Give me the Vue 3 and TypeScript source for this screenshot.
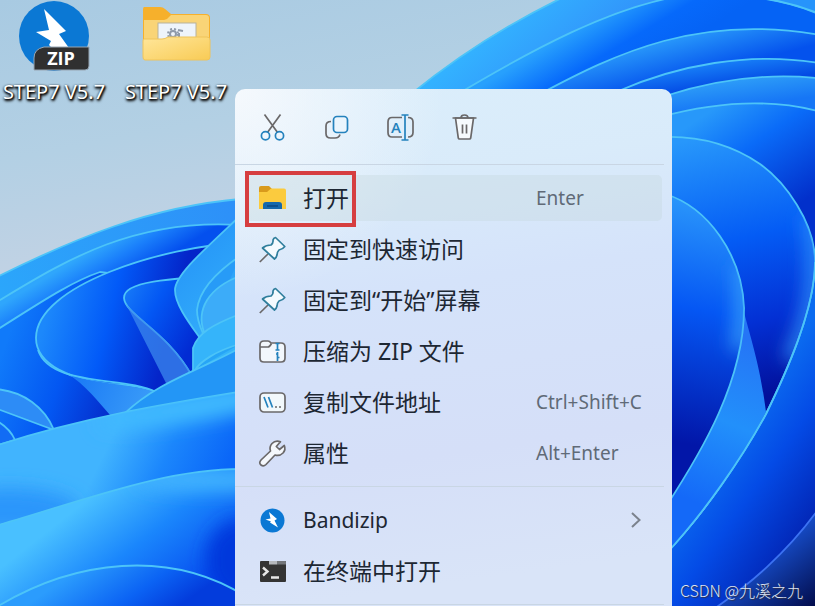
<script setup lang="ts">
interface Command {
  icon: string
  label: string
  shortcut?: string
  submenu?: boolean
  active?: boolean
}

const quickActions: { icon: string; label: string }[] = [
  { icon: 'cut', label: '剪切' },
  { icon: 'copy', label: '复制' },
  { icon: 'rename', label: '重命名' },
  { icon: 'delete', label: '删除' },
]

const groups: Command[][] = [
  [
    { icon: 'folder', label: '打开', shortcut: 'Enter', active: true },
    { icon: 'pin', label: '固定到快速访问' },
    { icon: 'pin', label: '固定到“开始”屏幕' },
    { icon: 'zip', label: '压缩为 ZIP 文件' },
    { icon: 'path', label: '复制文件地址', shortcut: 'Ctrl+Shift+C' },
    { icon: 'wrench', label: '属性', shortcut: 'Alt+Enter' },
  ],
  [
    { icon: 'bandizip', label: 'Bandizip', submenu: true },
    { icon: 'terminal', label: '在终端中打开' },
  ],
]

const isLatin = (text: string): boolean => /^[\x20-\x7e]+$/.test(text)
</script>

<template>
  <main class="desktop">
    <svg class="wallpaper" viewBox="0 0 815 606" preserveAspectRatio="xMidYMid slice" aria-hidden="true">
      <defs>
        <linearGradient id="sky" x1="0" y1="0" x2="0.25" y2="1">
          <stop offset="0" stop-color="#a8cae2" />
          <stop offset="0.25" stop-color="#b3d0e4" />
          <stop offset="0.5" stop-color="#c6d3e4" />
        </linearGradient>
        <linearGradient id="band1" gradientUnits="userSpaceOnUse" x1="0" y1="290" x2="234" y2="200">
          <stop offset="0" stop-color="#2ba6fb" />
          <stop offset="1" stop-color="#2d90f8" />
        </linearGradient>
        <linearGradient id="band2" gradientUnits="userSpaceOnUse" x1="95" y1="248" x2="118" y2="286">
          <stop offset="0" stop-color="#2fa6fc" />
          <stop offset="0.45" stop-color="#1a7ffb" />
          <stop offset="1" stop-color="#0450ee" />
        </linearGradient>
        <linearGradient id="band3" gradientUnits="userSpaceOnUse" x1="0" y1="360" x2="120" y2="400">
          <stop offset="0" stop-color="#107afa" />
          <stop offset="0.5" stop-color="#0357f2" />
          <stop offset="1" stop-color="#0529c8" />
        </linearGradient>
        <linearGradient id="petalL" gradientUnits="userSpaceOnUse" x1="45" y1="320" x2="165" y2="350">
          <stop offset="0" stop-color="#1c88fb" />
          <stop offset="0.5" stop-color="#025af8" />
          <stop offset="1" stop-color="#0425c9" />
        </linearGradient>
        <linearGradient id="petalS" gradientUnits="userSpaceOnUse" x1="125" y1="290" x2="200" y2="330">
          <stop offset="0" stop-color="#1679f8" />
          <stop offset="0.4" stop-color="#0357f4" />
          <stop offset="1" stop-color="#022bd3" />
        </linearGradient>
        <linearGradient id="flap" gradientUnits="userSpaceOnUse" x1="80" y1="375" x2="150" y2="405">
          <stop offset="0" stop-color="#1c7cf6" />
          <stop offset="1" stop-color="#3a9cf8" />
        </linearGradient>
        <linearGradient id="cyan" gradientUnits="userSpaceOnUse" x1="175" y1="260" x2="240" y2="330">
          <stop offset="0" stop-color="#2697f8" />
          <stop offset="1" stop-color="#35b0fb" />
        </linearGradient>
        <linearGradient id="wave1" gradientUnits="userSpaceOnUse" x1="115" y1="430" x2="220" y2="480">
          <stop offset="0" stop-color="#41b4fe" />
          <stop offset="0.5" stop-color="#1b86fc" />
          <stop offset="1" stop-color="#0a66f8" />
        </linearGradient>
        <linearGradient id="wave2" gradientUnits="userSpaceOnUse" x1="100" y1="490" x2="190" y2="605">
          <stop offset="0" stop-color="#49c0ff" />
          <stop offset="0.45" stop-color="#1a86fc" />
          <stop offset="1" stop-color="#0347ee" />
        </linearGradient>
        <linearGradient id="wave3" gradientUnits="userSpaceOnUse" x1="80" y1="568" x2="130" y2="640">
          <stop offset="0" stop-color="#2b9cfd" />
          <stop offset="0.6" stop-color="#0b63f4" />
          <stop offset="1" stop-color="#033cdc" />
        </linearGradient>
        <linearGradient id="r1" gradientUnits="userSpaceOnUse" x1="480" y1="40" x2="530" y2="100">
          <stop offset="0" stop-color="#33b2ff" />
          <stop offset="1" stop-color="#3194fb" />
        </linearGradient>
        <linearGradient id="r2" gradientUnits="userSpaceOnUse" x1="610" y1="8" x2="645" y2="66">
          <stop offset="0" stop-color="#27a0fd" />
          <stop offset="0.55" stop-color="#0669fb" />
          <stop offset="1" stop-color="#0563f5" />
        </linearGradient>
        <linearGradient id="r3" gradientUnits="userSpaceOnUse" x1="660" y1="36" x2="672" y2="82">
          <stop offset="0" stop-color="#2ca0fc" />
          <stop offset="1" stop-color="#0452ed" />
        </linearGradient>
        <linearGradient id="r4" gradientUnits="userSpaceOnUse" x1="740" y1="56" x2="744" y2="84">
          <stop offset="0" stop-color="#1a86fa" />
          <stop offset="1" stop-color="#034ae4" />
        </linearGradient>
        <linearGradient id="r5" gradientUnits="userSpaceOnUse" x1="740" y1="76" x2="744" y2="106">
          <stop offset="0" stop-color="#2fa0f8" />
          <stop offset="1" stop-color="#1676f6" />
        </linearGradient>
        <linearGradient id="r6" gradientUnits="userSpaceOnUse" x1="720" y1="105" x2="790" y2="210">
          <stop offset="0" stop-color="#2798fa" />
          <stop offset="0.4" stop-color="#0a6bf8" />
          <stop offset="1" stop-color="#0230cb" />
        </linearGradient>
        <linearGradient id="r7" gradientUnits="userSpaceOnUse" x1="690" y1="140" x2="750" y2="400">
          <stop offset="0" stop-color="#2797fb" />
          <stop offset="0.4" stop-color="#045cf5" />
          <stop offset="0.72" stop-color="#0330d4" />
          <stop offset="1" stop-color="#02109a" />
        </linearGradient>
        <linearGradient id="r8" gradientUnits="userSpaceOnUse" x1="710" y1="200" x2="665" y2="440">
          <stop offset="0" stop-color="#2b98fb" />
          <stop offset="0.45" stop-color="#0557f4" />
          <stop offset="1" stop-color="#0216a8" />
        </linearGradient>
        <linearGradient id="fold" gradientUnits="userSpaceOnUse" x1="752" y1="340" x2="690" y2="500">
          <stop offset="0" stop-color="#2575f6" />
          <stop offset="0.5" stop-color="#2290fb" />
          <stop offset="1" stop-color="#1469f8" />
        </linearGradient>
        <linearGradient id="lower" gradientUnits="userSpaceOnUse" x1="715" y1="455" x2="820" y2="530">
          <stop offset="0" stop-color="#0b6bf0" />
          <stop offset="0.4" stop-color="#044be6" />
          <stop offset="1" stop-color="#0220ae" />
        </linearGradient>
        <linearGradient id="corner" gradientUnits="userSpaceOnUse" x1="770" y1="550" x2="815" y2="606">
          <stop offset="0" stop-color="#164cc8" />
          <stop offset="1" stop-color="#020c4c" />
        </linearGradient>
        <filter id="soft" filterUnits="userSpaceOnUse" x="-100" y="-100" width="1015" height="806">
          <feGaussianBlur stdDeviation="9" />
        </filter>
        <clipPath id="clipR7"><path d="M672 137C705 136 735 147 760 164C785 182 815 222 815 262C815 310 785 375 766 414C742 458 705 512 672 548Z" /></clipPath>
        <clipPath id="clipR8"><path d="M672 197C708 207 742 255 744 308C744 380 703 450 672 498Z" /></clipPath>
        <clipPath id="clipW1"><path d="M0 446C80 418 165 404 240 392V469C150 472 80 502 0 524Z" /></clipPath>
        <clipPath id="clipW2"><path d="M0 526C80 503 165 469 240 470V592C170 553 90 560 0 606Z" /></clipPath>
      </defs>

      <rect width="815" height="606" fill="url(#sky)" />

      <g class="edge">
        <path fill="url(#band1)" d="M-5 278C75 238 150 207 240 199V460H-5Z" />
        <path fill="url(#band2)" d="M-5 303C60 264 130 218 240 225V460H-5Z" />
        <path fill="url(#band3)" d="M-5 331C35 306 70 282 100 272L240 290V460H-5Z" />
        <path fill="url(#petalL)" d="M240 243C165 246 36 285 36 338C36 365 72 380 110 384C130 385 148 388 156 393L240 390Z" />
        <path fill="url(#petalS)" d="M240 275C165 278 123 282 124 298C125 315 167 331 192 376L240 370Z" />
        <path fill="#3b88ee" fill-opacity=".75" stroke="none" d="M124 300L167 385L192 374C167 332 130 315 124 300Z" />
        <path fill="url(#cyan)" d="M240 216C205 249 175 275 175 290C175 305 190 324 202 341L240 320Z" />
        <path fill="#279bf7" d="M240 256C215 273 199 290 197 310C197 323 202 330 205 338" />
        <path fill="#3cacf9" d="M240 276C208 288 196 310 204 332L240 330Z" />
        <path fill="#35b4fa" d="M240 314C212 325 198 333 193 348V375L240 350Z" />
        <path fill="#27a5f6" d="M240 344C215 351 200 362 195 370" />
        <path fill="url(#flap)" stroke="none" d="M60 369C85 385 125 382 156 392L125 416L110 415C92 394 80 380 60 369Z" />
        <path fill="none" d="M38 350C50 387 125 376 156 392" />
        <path fill="#2d8cf6" d="M-5 389C24 391 45 408 54 430L-5 408Z" />
        <path fill="#126cf4" d="M-5 420C5 425 12 433 15 440L-5 446Z" />
        <path fill="#2396f6" d="M124 414C157 382 200 370 240 348V410Z" />
        <path fill="url(#wave1)" d="M-5 446C80 418 165 404 245 391V620H-5Z" />
        <g clip-path="url(#clipW1)" stroke="none">
          <ellipse cx="205" cy="405" rx="110" ry="15" fill="#40bafe" filter="url(#soft)" transform="rotate(-10 205 405)" />
          <ellipse cx="10" cy="510" rx="70" ry="22" fill="#2b96fb" filter="url(#soft)" />
        </g>
        <path fill="url(#wave2)" d="M-5 526C80 502 165 468 245 469V620H-5Z" />
        <g clip-path="url(#clipW2)" stroke="none">
          <ellipse cx="240" cy="560" rx="34" ry="40" fill="#0237dc" filter="url(#soft)" />
          <ellipse cx="215" cy="480" rx="80" ry="11" fill="#43b4fe" filter="url(#soft)" />
        </g>
        <path fill="url(#wave3)" d="M-5 608C75 559 170 549 245 596V620H-5Z" />
      </g>

      <g class="edge">
        <path fill="url(#r1)" d="M410 95C465 50 515 20 570 -6H830V140H410Z" />
        <path fill="url(#r2)" d="M456 95C535 48 610 8 680 -4C730 -6 780 -5 825 17V140H460Z" />
        <path fill="#2794fb" d="M735 -5C765 -3 795 3 825 16V-10Z" />
        <path fill="url(#r3)" d="M540 94C615 54 700 12 825 36V140H540Z" />
        <path fill="url(#r4)" d="M616 92C675 66 750 50 825 64V140H616Z" />
        <path fill="url(#r5)" d="M665 96C715 80 770 72 825 79V180H665Z" />
        <path fill="url(#r6)" d="M660 117C715 102 770 97 825 113V300H660Z" />
        <path fill="url(#lower)" stroke="none" d="M815 245V606H665V555C735 485 815 345 815 245Z" />
        <path fill="url(#r7)" d="M665 137C705 136 735 147 760 164C785 182 815 222 815 262C815 310 785 375 766 414C742 458 705 512 665 555Z" />
        <g clip-path="url(#clipR7)" stroke="none">
          <path d="M810 215C822 280 808 325 790 360" fill="none" stroke="#2e91fa" stroke-width="14" filter="url(#soft)" />
        </g>
        <path fill="url(#fold)" stroke="none" d="M744 312C751 340 760 365 766 412C742 458 705 512 665 555V490C705 440 742 375 744 312Z" />
        <path fill="none" d="M815 262C815 310 785 375 766 414C742 458 705 512 665 555" />
        <path fill="url(#r8)" d="M665 194C708 207 742 255 744 308C744 380 703 450 665 508Z" />
        <g clip-path="url(#clipR8)" stroke="none">
          <path d="M741 265C746 300 742 330 738 350" fill="none" stroke="#39a0fa" stroke-width="14" filter="url(#soft)" />
        </g>
        <path fill="url(#corner)" stroke="#3c72f2" d="M820 507C788 552 750 585 705 615H820Z" />
      </g>
    </svg>

    <section class="shortcuts" aria-label="桌面图标">
      <button class="shortcut" type="button">
        <svg class="shortcut-art" viewBox="0 0 72 72" aria-hidden="true">
          <circle cx="36" cy="36" r="35" fill="#0b78d4" />
          <path fill="#fff" d="M26 9L48 31L41 34L51 48V50H36L31 45L33 41L18 32L31 30Z" />
          <path fill="#303030" stroke="#97a6b4" stroke-width="1" d="M26 47H71V66Q71 70 67 70H16V58Q16 49 26 47Z" />
          <text x="43" y="65" text-anchor="middle" class="badge-text">ZIP</text>
        </svg>
        <span>STEP7 V5.7</span>
      </button>
      <button class="shortcut" type="button">
        <svg class="shortcut-art" viewBox="0 0 72 72" aria-hidden="true">
          <defs>
            <linearGradient id="folderFront" x1="0" y1="0" x2="1" y2="1">
              <stop offset="0" stop-color="#ffe69a" />
              <stop offset="1" stop-color="#f8cb55" />
            </linearGradient>
          </defs>
          <path fill="#f6b02c" d="M4 7H20Q23 7 25 9L31 14H66Q70 14 70 18V44H3V10Q3 7 4 7Z" />
          <path fill="#f9d477" d="M4 20H24Q27 20 29 17L31 15H66Q69 15 69 18V44H4Z" />
          <rect x="18" y="23" width="38" height="20" fill="#eef4fb" stroke="#b8b29c" />
          <g fill="none" stroke="#8f9aaa">
            <circle cx="33" cy="34" r="3" stroke-width="2" />
            <circle cx="33" cy="34" r="5" stroke-width="2" stroke-dasharray="2 2" />
            <path stroke-width="2" d="M38 30L43 31M39 33V37" />
          </g>
          <path fill="url(#folderFront)" stroke="#efc45b" stroke-width="1" d="M4 39H22Q25 39 28 37H67Q70 37 70 40V57Q70 60 67 60H5Q3 60 3 57V41Q3 39 4 39Z" />
        </svg>
        <span>STEP7 V5.7</span>
      </button>
    </section>

    <div class="menu" role="menu" aria-label="文件菜单">
      <div class="quick">
        <button v-for="a in quickActions" :key="a.icon" class="quick-button" type="button" :aria-label="a.label">
          <svg class="icon" viewBox="0 0 27 27" aria-hidden="true">
            <g v-if="a.icon === 'cut'" fill="none" stroke-width="1.7">
              <path class="ink" d="M5.5 .5L18.4 18.3M21.5 .5L8.600 18.3" />
              <circle class="accent" cx="6.5" cy="21.8" r="4.1" />
              <circle class="accent" cx="20.5" cy="21.8" r="4.1" />
            </g>
            <g v-else-if="a.icon === 'copy'" fill="none" stroke-width="1.7">
              <path class="ink" d="M8 7.5Q3 7.5 3 12V19.5Q3 24 7.500 24H12Q16 24 17 20.500" />
              <rect class="accent" x="10.500" y="2.500" width="14" height="16" rx="3.500" fill="#eaf5fd" />
            </g>
            <g v-else-if="a.icon === 'rename'" fill="none" stroke-width="1.7">
              <path class="ink" d="M15 3.500H5Q1 3.500 1 8V18.500Q1 23 5 23H15M21 3.500Q26 3.500 26 8V18.500Q26 23 21 23" />
              <path class="accent" d="M18 1V26M14.500 1H21.500M14.500 26H21.500" />
              <text x="9" y="19" text-anchor="middle" class="rename-letter">A</text>
            </g>
            <g v-else fill="#f6fafd" stroke-width="1.7" class="ink">
              <path d="M4.500 4L7.300 24Q7.500 25 8.500 25H18.500Q19.500 25 19.700 24L22.500 4Z" />
              <path fill="none" d="M1.500 4H25.500M10 4Q10 1 13.500 1Q17 1 17 4M11.500 10.500V19.500M15.500 10.500V19.500" />
            </g>
          </svg>
        </button>
      </div>

      <template v-for="(group, g) in groups" :key="g">
        <hr class="divider" />
        <div class="group" role="group">
          <button
            v-for="item in group"
            :key="item.label"
            type="button"
            role="menuitem"
            class="item"
            :class="{ active: item.active }"
          >
            <svg class="icon" viewBox="0 0 27 27" aria-hidden="true">
              <g v-if="item.icon === 'folder'">
                <path fill="#d99a1c" d="M0 3Q0 1 2 1H10L13 4V8H0Z" />
                <path fill="#fbcb3e" d="M0 7H8L12 3.500H25Q27 3.500 27 5.500V24H0Z" />
                <path fill="#1468ad" d="M4 24V20Q4 17 7 17H20Q23 17 23 20V24Z" />
                <path fill="#0c4f8d" d="M8 20H19V22H8Z" />
              </g>
              <g v-else-if="item.icon === 'pin'" fill="#f4fafe" stroke-width="1.7" stroke-linejoin="round">
                <path class="ink" d="M.8 26L9 18" />
                <path class="pin" d="M16.500 1.500L25.800 10.500Q24 13 20 14Q18 16 18 19Q17.500 21.500 15.500 23L3.500 12Q7 9 12 9Q14.500 7 14 4Q14.500 2 16.500 1.500Z" />
              </g>
              <g v-else-if="item.icon === 'zip'" fill="#f2f7fc" stroke-width="1.7">
                <path class="ink" d="M1 7Q1 3 5 3H9Q10.500 3 12 5H22Q26 5 26 9V20Q26 24 22 24H5Q1 24 1 20Z" />
                <path class="ink" fill="none" d="M1 9H9Q10.500 9 12.500 5.500" />
                <path class="accent" fill="none" d="M16.500 5.500H20.500M18.500 6V12M16.500 12H20.500M18.500 14V23M17 16H19M18.500 19.500H20.500" />
              </g>
              <g v-else-if="item.icon === 'path'" fill="#f2f8fb" stroke-width="1.7">
                <rect class="ink" x="1" y="4" width="25" height="19" rx="4" />
                <path class="accent" d="M5 8L9 18.500M9.500 8L13.500 18.500" />
                <path class="ink" d="M16 18H18M20 18H22" />
              </g>
              <g v-else-if="item.icon === 'wrench'" fill="#f5f8fc" stroke-width="1.7" stroke-linejoin="round">
                <path class="ink" d="M21.500 1.800Q16.500 -.2 13 3.500Q10 7 11.500 11L2 20Q-.5 23 2 25Q4.500 27 7 24.500L16 15Q20.500 16.500 24 13Q27 9.500 25.300 5.500L20.500 9.500L17.300 6.500Z" />
              </g>
              <g v-else-if="item.icon === 'bandizip'">
                <circle cx="13.500" cy="13.500" r="12" fill="#0b78d4" />
                <path fill="#fff" d="M10 5L18 12L15.500 13.500L19 20.500L11 15.500L12 14.500L6.500 12.500L11.500 11.500Z" />
              </g>
              <g v-else>
                <rect x="1" y="3" width="26" height="21" rx="1" fill="#343434" />
                <path fill="#b5b8bd" d="M10 3H18V6.500H10Z" />
                <path fill="#73767a" d="M18 3H26Q27 3 27 4V6.500H18Z" />
                <path fill="none" stroke="#e7e7e7" stroke-width="2.400" d="M4 9.500L8.500 13.500L4 17.500M12 19.500H20" />
              </g>
            </svg>
            <span class="label" :class="{ latin: isLatin(item.label) }">{{ item.label }}</span>
            <span v-if="item.shortcut" class="keys">{{ item.shortcut }}</span>
            <svg v-if="item.submenu" class="chevron" viewBox="0 0 10 16" aria-hidden="true">
              <path d="M1 1L8.500 8L1 15" />
            </svg>
            <span v-if="item.active" class="marker" aria-hidden="true"></span>
          </button>
        </div>
      </template>
      <hr class="divider" />
    </div>

    <p class="credit">CSDN @九溪之九</p>
  </main>
</template>

<style>
body {
  margin: 0;
}
</style>

<style scoped>
.desktop {
  position: relative;
  height: 100vh;
  overflow: hidden;
  font-family: "Noto Sans", "Noto Sans CJK SC", sans-serif;
}
.wallpaper {
  position: absolute;
  inset: 0;
  width: 100%;
  height: 100%;
}
.edge {
  stroke: #4cc4f8;
  stroke-width: 1.8;
}
button {
  border: 0;
  padding: 0;
  background: none;
  font: inherit;
  color: inherit;
}
.shortcuts {
  position: relative;
  display: flex;
  margin-left: -7px;
}
.shortcut {
  display: flex;
  flex-direction: column;
  align-items: center;
  width: 122px;
  color: #fff;
  font-size: 20px;
  line-height: 28px;
  white-space: nowrap;
  text-shadow: 1px 1px 2px #000, 0 1px 3px #000, 1px 2px 3px #222;
}
.shortcut-art {
  width: 72px;
  height: 72px;
  margin-bottom: 6px;
}
.badge-text {
  font: 700 18px "Open Sans", sans-serif;
  fill: #fff;
  text-shadow: none;
}
.menu {
  position: absolute;
  top: 89px;
  left: 235px;
  width: 437px;
  box-sizing: border-box;
  padding-bottom: 60px;
  border-radius: 10px 10px 0 0;
  background:
    radial-gradient(circle at 0 0, rgba(248, 250, 253, 0.9), rgba(240, 247, 253, 0) 210px),
    linear-gradient(172deg, #dbeefb 0, #d9ebfa 110px, #d5e3fa 220px, #d5dff8 390px, #d9e4f8 520px);
  color: #1d2733;
}
.quick {
  display: flex;
  gap: 20px;
  padding: 16px 15px 15px;
}
.quick-button {
  display: grid;
  place-items: center;
  width: 44px;
  height: 44px;
}
.icon {
  width: 27px;
  height: 27px;
  overflow: visible;
}
.ink {
  stroke: #6a6869;
}
.accent {
  stroke: #2482bd;
}
.pin {
  stroke: #2f7e9c;
}
.rename-letter {
  font: 600 15px "Open Sans", sans-serif;
  fill: #2482bd;
}
.divider {
  height: 1px;
  margin: 0 8px 0 0;
  border: 0;
  background: #c9d6e4;
}
.group {
  display: flex;
  flex-direction: column;
  gap: 5px;
  padding: 10px;
}
.item {
  position: relative;
  display: flex;
  align-items: center;
  gap: 17px;
  height: 46px;
  padding-left: 14px;
  border-radius: 5px;
  text-align: left;
  font-size: 23px;
  line-height: 32px;
}
.item.active {
  background: rgba(196, 216, 222, 0.38);
}
.label {
  flex: 1;
  white-space: nowrap;
}
.label.latin {
  font-size: 21px;
}
.keys {
  width: 126px;
  color: #606a77;
  font-size: 19px;
  white-space: nowrap;
}
.chevron {
  width: 10px;
  height: 16px;
  margin-right: 21px;
  fill: none;
  stroke: #7b828d;
  stroke-width: 2;
}
.marker {
  position: absolute;
  top: -4px;
  left: 0;
  width: 111px;
  height: 56px;
  box-sizing: border-box;
  border: 4px solid #d63e40;
}
.credit {
  position: absolute;
  right: 12px;
  bottom: 4px;
  margin: 0;
  color: #dfe5f2;
  font-family: "Noto Sans CJK SC", sans-serif;
  font-size: 16px;
  font-weight: 300;
  line-height: 24px;
  text-shadow: 1px 1px 1px #334;
}
</style>
